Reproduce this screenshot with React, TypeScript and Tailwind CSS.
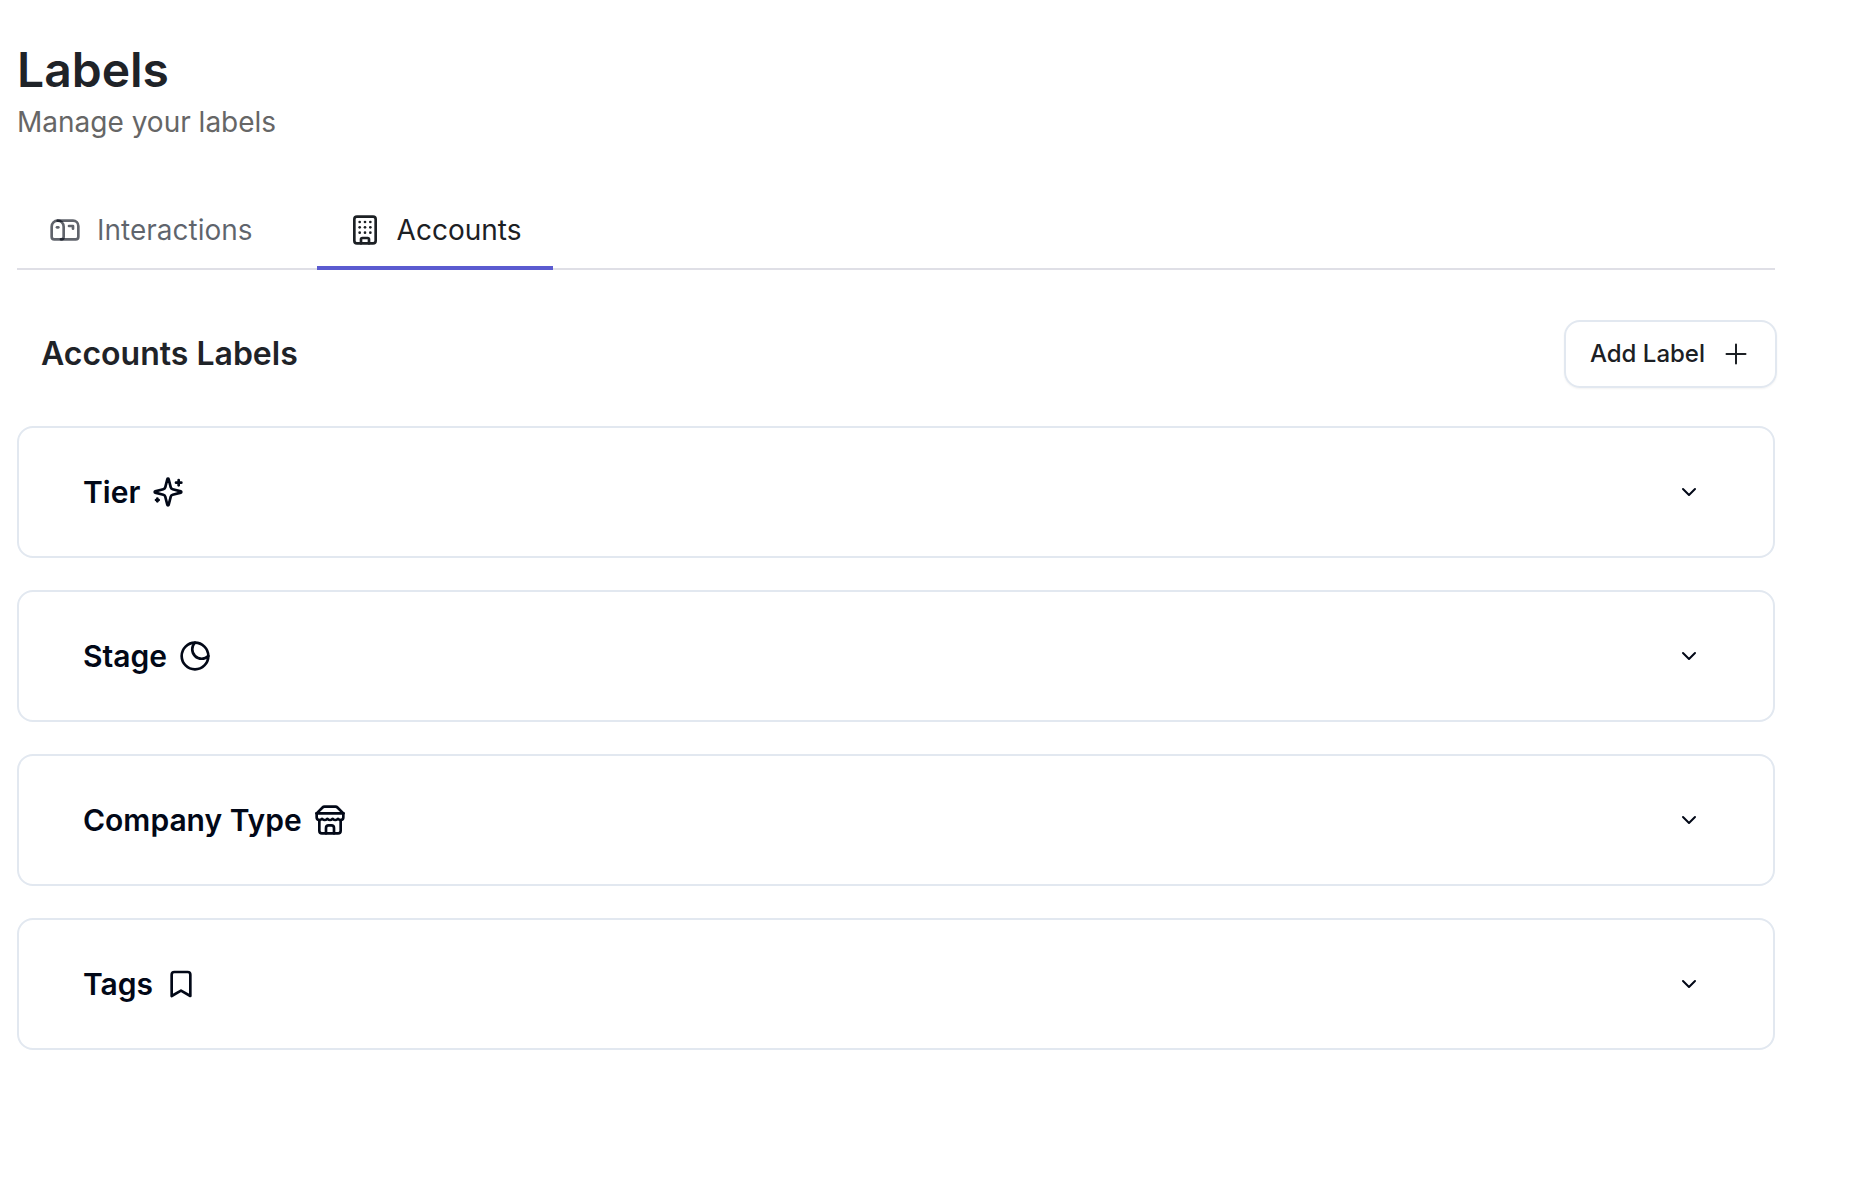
import { useState, type ReactNode } from "react";
import { Bookmark, Building, ChevronDown, Eclipse } from "lucide-react";

function Icon({ children }: { children: ReactNode }) {
  return (
    <svg
      viewBox="0 0 24 24"
      className="size-8 shrink-0"
      fill="none"
      stroke="currentColor"
      strokeWidth={2}
      strokeLinecap="round"
      strokeLinejoin="round"
      aria-hidden="true"
    >
      {children}
    </svg>
  );
}

function MailboxIcon() {
  return (
    <Icon>
      <path d="M22 17a2 2 0 0 1-2 2H4a2 2 0 0 1-2-2V9.5C2 7 4 5 6.5 5H18c2.2 0 4 1.8 4 4v8Z" />
      <polyline points="15,9 18,9 18,11" />
      <path d="M6.5 5C9 5 11 7 11 9.5V17a2 2 0 0 1-2 2" />
      <line x1="6" x2="7" y1="10" y2="10" />
    </Icon>
  );
}

function SparklesIcon() {
  return (
    <Icon>
      <path d="M9.937 15.5A2 2 0 0 0 8.5 14.063l-6.135-1.582a.5.5 0 0 1 0-.962L8.5 9.936A2 2 0 0 0 9.937 8.5l1.582-6.135a.5.5 0 0 1 .963 0L14.063 8.5A2 2 0 0 0 15.5 9.937l6.135 1.581a.5.5 0 0 1 0 .964L15.5 14.063a2 2 0 0 0-1.437 1.437l-1.582 6.135a.5.5 0 0 1-.963 0z" />
      <path d="M20 3v4" />
      <path d="M22 5h-4" />
      <path d="M4 17v2" />
      <path d="M5 18H3" />
    </Icon>
  );
}

function StoreIcon() {
  return (
    <Icon>
      <path d="m2 7 4.41-4.41A2 2 0 0 1 7.83 2h8.34a2 2 0 0 1 1.42.59L22 7" />
      <path d="M4 12v8a2 2 0 0 0 2 2h12a2 2 0 0 0 2-2v-8" />
      <path d="M15 22v-4a2 2 0 0 0-2-2h-2a2 2 0 0 0-2 2v4" />
      <path d="M2 7h20" />
      <path d="M22 7v3a2 2 0 0 1-2 2a2.7 2.7 0 0 1-1.59-.63.7.7 0 0 0-.82 0A2.7 2.7 0 0 1 16 12a2.7 2.7 0 0 1-1.59-.63.7.7 0 0 0-.82 0A2.7 2.7 0 0 1 12 12a2.7 2.7 0 0 1-1.59-.63.7.7 0 0 0-.82 0A2.7 2.7 0 0 1 8 12a2.7 2.7 0 0 1-1.59-.63.7.7 0 0 0-.82 0A2.7 2.7 0 0 1 4 12a2 2 0 0 1-2-2V7" />
    </Icon>
  );
}

function PlusIcon() {
  return (
    <svg viewBox="0 0 15 15" className="size-[30px] shrink-0" fill="currentColor" aria-hidden="true">
      <path d="M8 2.75a.5.5 0 0 0-1 0V7H2.75a.5.5 0 0 0 0 1H7v4.25a.5.5 0 0 0 1 0V8h4.25a.5.5 0 0 0 0-1H8V2.75Z" />
    </svg>
  );
}

const tabs = [
  { name: "Interactions", icon: <MailboxIcon /> },
  { name: "Accounts", icon: <Building className="size-8" /> },
];

const groups = [
  { name: "Tier", icon: <SparklesIcon /> },
  { name: "Stage", icon: <Eclipse className="size-8" /> },
  { name: "Company Type", icon: <StoreIcon /> },
  { name: "Tags", icon: <Bookmark className="size-8" /> },
];

export default function App() {
  const [active, setActive] = useState("Accounts");

  return (
    <main className="min-h-screen bg-white pt-10 pr-[95px] pb-16 pl-[17px] font-['Inter',sans-serif] text-[#1f2328]">
      <header>
        <h1 className="text-5xl leading-[60px] font-semibold">Labels</h1>
        <p className="text-[28px] leading-[44px] text-[#666666]">Manage your labels</p>
      </header>

      <div role="tablist" className="mt-12 flex gap-8 border-b-2 border-[#dfdfe6]">
        {tabs.map((tab) => (
          <button
            key={tab.name}
            type="button"
            role="tab"
            aria-selected={active === tab.name}
            onClick={() => setActive(tab.name)}
            className={
              active === tab.name
                ? "-mb-0.5 flex h-[78px] items-center gap-4 border-b-4 border-[#5b5bd0] px-8 pt-0.5 text-[28px] text-[#1c2024]"
                : "-mb-0.5 flex h-[78px] items-center gap-4 border-b-4 border-transparent px-8 pt-0.5 text-[28px] text-[#0007149f]"
            }
          >
            {tab.icon}
            {tab.name}
          </button>
        ))}
      </div>

      <section className="mt-[50px]">
        <div className="flex items-center justify-between pl-6">
          <h2 className="text-[32px] leading-10 font-semibold">Accounts Labels</h2>
          <button
            type="button"
            className="-mr-0.5 flex h-[68px] items-center gap-4 rounded-2xl border-2 border-slate-200 px-6 text-2xl font-medium text-[#1c2024] shadow-xs"
          >
            Add Label
            <PlusIcon />
          </button>
        </div>

        <div className="mt-[38px] flex flex-col gap-8">
          {groups.map((group) => (
            <button
              key={group.name}
              type="button"
              aria-expanded={false}
              className="flex h-[132px] items-center justify-between rounded-2xl border-2 border-slate-200 pr-[72px] pl-16 text-[30px] font-semibold text-[#020817]"
            >
              <span className="flex items-center gap-3">
                {group.name}
                {group.icon}
              </span>
              <ChevronDown className="size-6" />
            </button>
          ))}
        </div>
      </section>
    </main>
  );
}
